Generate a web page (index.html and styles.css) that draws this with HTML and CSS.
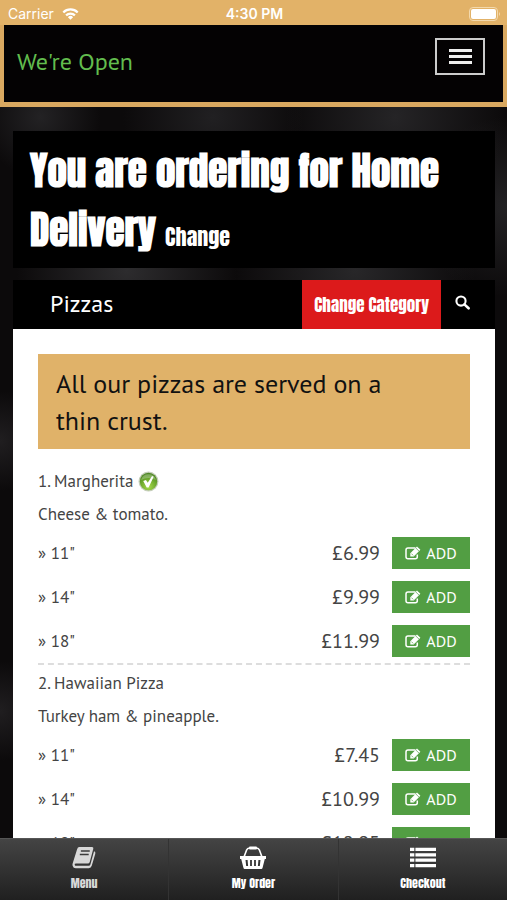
FILE: index.html
```html
<!DOCTYPE html>
<html lang="en">
<head>
<meta charset="utf-8">
<meta name="viewport" content="width=device-width, initial-scale=1">
<title>Order online</title>
<link rel="stylesheet" href="styles.css">
</head>
<body>
<svg class="symbols" aria-hidden="true">
  <symbol id="edit" viewBox="0 0 16 14">
    <path d="M12.3 8.5v2.3a2 2 0 0 1-2 2H3a2 2 0 0 1-2-2V4a2 2 0 0 1 2-2h7.5" fill="none" stroke="currentColor" stroke-width="1.5"/>
    <path d="M5.3 7.2 12 .6l3.4 3.2-6.7 6.7H5.3z" fill="currentColor"/>
    <path d="m10.8 2 3.2 3.1M6.4 7.6l1.8 1.8" stroke="#529e43" stroke-width=".7"/>
  </symbol>
</svg>
<div class="app">
  <div class="status">
    <div class="carrier">Carrier
      <svg class="wifi" viewBox="0 0 18 13"><g fill="none" stroke="#fff" stroke-width="2.4"><path d="M1.2 4.8a11 11 0 0 1 15.6 0"/><path d="M4.2 8a6.8 6.8 0 0 1 9.6 0"/></g><path d="m6.2 9.9a4 4 0 0 1 5.6 0L9 12.8z" fill="#fff"/></svg>
    </div>
    <div class="time">4:30 PM</div>
    <svg class="battery" viewBox="0 0 32 14"><rect x=".5" y=".5" width="28" height="13" rx="3.5" fill="none" stroke="#f3d9ad"/><rect x="2" y="2" width="25" height="10" rx="2" fill="#fff"/><path d="M30 5q2 2 0 4z" fill="#f3d9ad"/></svg>
  </div>
  <header class="topbar">
    <span class="open">We're Open</span>
    <button class="burger" type="button" aria-label="Toggle navigation"><i></i><i></i><i></i></button>
  </header>
  <main class="content">
    <h1 class="hero">You are ordering for Home Delivery <a href="#change">Change</a></h1>
    <section class="panel">
      <div class="panel-head">
        <h2>Pizzas</h2>
        <button class="category" type="button">Change Category</button>
        <button class="search" type="button" aria-label="Search"><svg viewBox="0 0 16 16"><circle cx="6.4" cy="6.4" r="4.9" fill="none" stroke="#fff" stroke-width="2.2"/><path d="m10 10 4.5 4.2" stroke="#fff" stroke-width="2.8" stroke-linecap="round"/></svg></button>
      </div>
      <div class="panel-body">
        <p class="notice">All our pizzas are served on a thin crust.</p>
        <article class="item">
          <h3>1. Margherita
            <svg class="veg" viewBox="0 0 20 20"><defs><radialGradient id="g" cx=".5" cy=".8" r=".8"><stop offset="0" stop-color="#a6d94a"/><stop offset=".6" stop-color="#69a52b"/><stop offset="1" stop-color="#4b8227"/></radialGradient></defs><circle cx="10" cy="10" r="9.5" fill="#c5ceba"/><circle cx="10" cy="10" r="8.3" fill="url(#g)"/><path d="M3 8.5a7.2 7.2 0 0 1 14 0q-7-3.5-14 0" fill="#fff" opacity=".25"/><path d="m5 9.5 2.6-1 1.7 2.8 4.1-6.6 1.5.8-4.8 10.2h-1.8z" fill="#fff"/></svg>
          </h3>
          <p>Cheese &amp; tomato.</p>
          <div class="row"><span>» 11"</span><span class="price">£6.99</span><button class="add" type="button"><svg><use href="#edit"/></svg>ADD</button></div>
          <div class="row"><span>» 14"</span><span class="price">£9.99</span><button class="add" type="button"><svg><use href="#edit"/></svg>ADD</button></div>
          <div class="row"><span>» 18"</span><span class="price">£11.99</span><button class="add" type="button"><svg><use href="#edit"/></svg>ADD</button></div>
        </article>
        <article class="item">
          <h3>2. Hawaiian Pizza</h3>
          <p>Turkey ham &amp; pineapple.</p>
          <div class="row"><span>» 11"</span><span class="price">£7.45</span><button class="add" type="button"><svg><use href="#edit"/></svg>ADD</button></div>
          <div class="row"><span>» 14"</span><span class="price">£10.99</span><button class="add" type="button"><svg><use href="#edit"/></svg>ADD</button></div>
          <div class="row"><span>» 18"</span><span class="price">£12.95</span><button class="add" type="button"><svg><use href="#edit"/></svg>ADD</button></div>
        </article>
      </div>
    </section>
  </main>
  <nav class="tabs">
    <a class="current" href="#menu"><svg viewBox="0 0 24 22"><path d="M7.5 1h12.2q1.6 0 1.2 1.6l-3.4 12.6q-.4 1.5-2 1.5H4.4q-1.7 0-1.3 1.4.3.9 1.6.9h11.8q1.2 0 1.6-1.2L21.6 5q1.7.5 1.2 2.3L19.4 19q-.6 2.2-2.9 2.2H4.1q-2.3 0-3-2.4-.3-1.1.1-2.3L5.4 3Q6 1 7.5 1z" fill="currentColor"/><path d="M9 4.8h8.5M8 8.2h8.5" stroke="#3a3a3a" stroke-width="1.5"/></svg>Menu</a>
    <a href="#order"><svg viewBox="0 0 26 23"><path d="M4 11 6.6 4q.8-2 2.8-2h7.2q2 0 2.8 2L22 11" fill="none" stroke="currentColor" stroke-width="1.6"/><rect x="9" y=".5" width="8" height="3" rx="1" fill="currentColor"/><path fill-rule="evenodd" d="M0 10h26v3h-1.2L22.5 22q-.2 1-1.2 1H4.7q-1 0-1.2-1L1.2 13H0zM5.5 14l.7 6h1.9l-.5-6zm4.6 0v6h1.8v-6zm4 0v6h1.8v-6zm4.3 0-.5 6h1.9l.7-6z" fill="currentColor"/></svg>My Order</a>
    <a href="#checkout"><svg viewBox="0 0 24 20"><path d="M0 1h4v3H0zm5 0h19v3H5zM0 6h4v3H0zm5 0h19v3H5zM0 11h4v3H0zm5 0h19v3H5zM0 16h4v3H0zm5 0h19v3H5z" fill="currentColor"/></svg>Checkout</a>
  </nav>
</div>
</body>
</html>
```
FILE: styles.css
```css
* { box-sizing: border-box; }
body {
  margin: 0;
  font-family: "PT Sans", "Noto Sans", sans-serif;
  color: #444;
  background: #080607;
}
h1, h2, h3, p { margin: 0; font-weight: 400; }
button { border: 0; border-radius: 0; padding: 0; font: inherit; color: #fff; cursor: pointer; }
a { color: inherit; text-decoration: none; }
.symbols { position: absolute; width: 0; height: 0; }

.app {
  display: flex;
  flex-direction: column;
  height: 100vh;
  background:
    radial-gradient(circle at 8% 13%, #232224 0, transparent 60px),
    radial-gradient(circle at 42% 13%, #212022 0, transparent 90px),
    radial-gradient(circle at 78% 13%, #252426 0, transparent 110px),
    radial-gradient(circle at 100% 23%, #232224 0, transparent 90px),
    radial-gradient(circle at 25% 30%, #2d2c2e 0, transparent 110px),
    radial-gradient(circle at 70% 30%, #282729 0, transparent 120px),
    radial-gradient(circle at 0% 49%, #201e20 0, transparent 50px),
    radial-gradient(circle at 0% 79%, #201e20 0, transparent 50px),
    #0c0a0b;
}
.status {
  display: grid;
  grid-template-columns: 1fr auto 1fr;
  align-items: center;
  height: 25px;
  padding: 2px 6px 0 8px;
  background: #e2b268;
  color: #fff;
  font: 14px/20px Inter, sans-serif;
}
.carrier { display: flex; align-items: center; gap: 8px; }
.wifi { width: 17px; height: 12px; }
.time { font-weight: 600; }
.battery { width: 32px; height: 14px; justify-self: end; }

.topbar {
  display: flex;
  flex: none;
  align-items: flex-start;
  justify-content: space-between;
  height: 82px;
  padding: 13px 18px 0 13px;
  border: solid #d9a860;
  border-width: 0 4px 5px;
  background: #040203;
}
.open { margin-top: 6px; color: #62bd4e; font-size: 24px; line-height: 36px; }
.burger {
  display: flex;
  flex-direction: column;
  align-items: center;
  justify-content: center;
  gap: 3px;
  width: 50px;
  height: 37px;
  border: 2px solid #ccc;
  background: transparent;
}
.burger i { width: 23px; height: 3px; background: #eee; }

.content {
  flex: 1;
  min-height: 0;
  padding: 24px 12px 0 13px;
  overflow-y: auto;
  scrollbar-width: none;
}
.hero, .category, .tabs { font-family: Anton, "Liberation Sans Narrow", "Liberation Sans", sans-serif; font-weight: 400; }
.hero {
  margin-bottom: 12px;
  padding: 10px 17px 9px;
  background: #000;
  color: #fff;
  font-size: 39px;
  font-weight: 700;
  line-height: 59px;
}
.hero a { font-size: 22px; font-weight: 400; line-height: 1; }
.panel-head { display: flex; height: 49px; background: #000; color: #fff; }
.panel-head h2 { flex: 1; padding-left: 37px; font-size: 24px; line-height: 48px; }
.category { padding: 0 12px; background: #dc1a1b; font-size: 17px; }
.search { display: grid; place-items: center; width: 54px; padding: 0 12px 4px 0; background: #000; }
.search svg { width: 15px; height: 15px; }
.panel-body { padding: 25px; background: #fff; }
.notice {
  margin-bottom: 16px;
  padding: 11px 60px 10px 18px;
  background: #e0b269;
  color: #111;
  font-size: 26px;
  line-height: 37px;
}
.item h3, .item p { font-size: 17px; line-height: 33px; }
.item h3 { display: flex; align-items: center; gap: 5px; }
.veg { width: 21px; height: 21px; }
.item + .item { border-top: 2px dashed #ddd; padding-top: 2px; }
.row { display: flex; align-items: center; height: 44px; font-size: 17px; }
.price { margin-left: auto; padding-right: 12px; font-size: 20px; }
.add {
  display: flex;
  align-items: center;
  justify-content: center;
  gap: 5px;
  width: 78px;
  height: 32px;
  background: #529e43;
  font-size: 16px;
}
.add svg { width: 16px; height: 14px; }

.tabs {
  display: flex;
  flex: none;
  height: 62px;
  border-top: 1px solid #555;
  background: linear-gradient(#444, #202020);
  color: #fff;
  font-size: 12px;
  line-height: 18px;
}
.tabs a { display: flex; flex: 1; flex-direction: column; align-items: center; gap: 5px; padding-top: 7px; }
.tabs a + a { border-left: 1px solid #333; }
.tabs .current { color: #d8d8d8; }
.tabs svg { width: 26px; height: 23px; }
```
